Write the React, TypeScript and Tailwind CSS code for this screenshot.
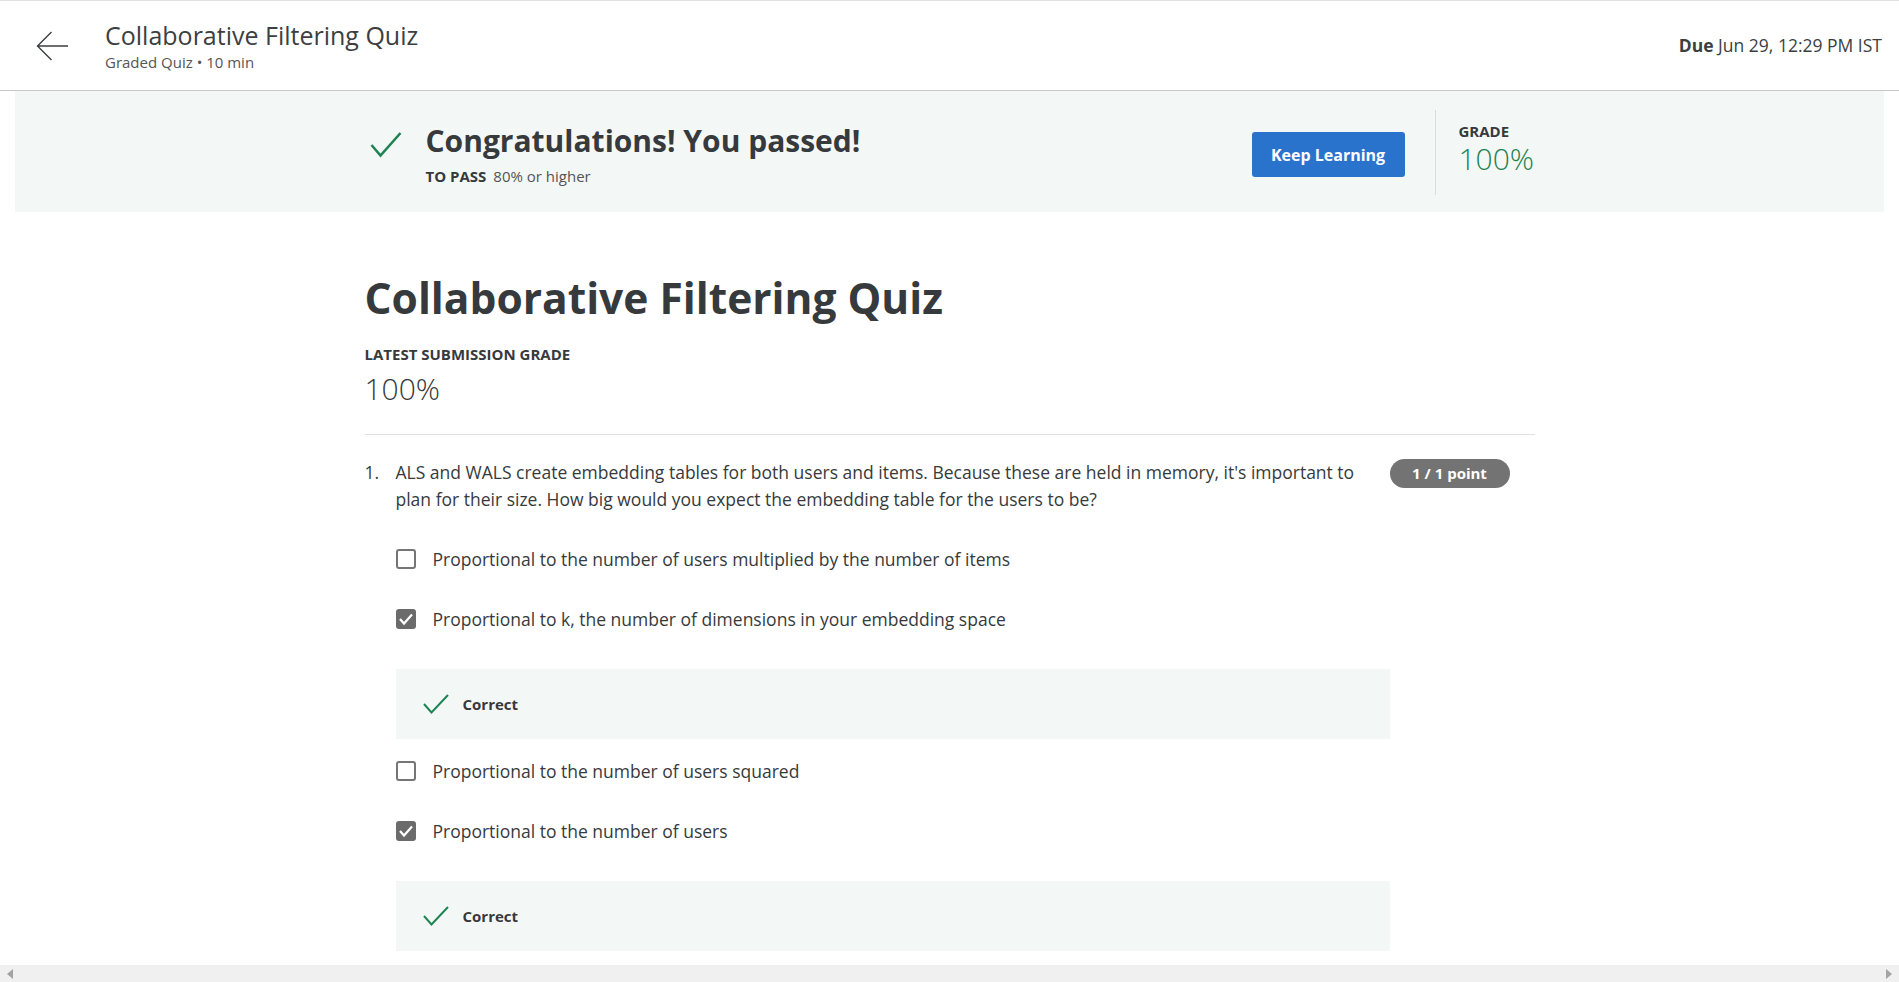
import React from 'react'

const options = [
  { label: 'Proportional to the number of users multiplied by the number of items', checked: false, correct: false },
  { label: 'Proportional to k, the number of dimensions in your embedding space', checked: true, correct: true },
  { label: 'Proportional to the number of users squared', checked: false, correct: false },
  { label: 'Proportional to the number of users', checked: true, correct: true },
]

function GreenCheck({ className }: { className?: string }) {
  return (
    <svg viewBox="0 0 32 27" className={className} fill="none">
      <path d="M1.5 14 L10.5 24.5 L30.5 2" stroke="#1f8354" strokeWidth="2.6" />
    </svg>
  )
}

function Checkbox({ checked }: { checked: boolean }) {
  if (checked) {
    return (
      <span className="w-5 h-5 rounded-[3px] bg-[#6b6b6b] flex items-center justify-center flex-shrink-0">
        <svg viewBox="0 0 20 20" className="w-5 h-5" fill="none">
          <path d="M4 10 L8 14.5 L16 5.5" stroke="white" strokeWidth="2.2" />
        </svg>
      </span>
    )
  }
  return <span className="w-5 h-5 rounded-[3px] border-2 border-[#767676] bg-white flex-shrink-0" />
}

export default function App() {
  return (
    <div className="h-screen flex flex-col overflow-hidden bg-white font-['Open_Sans',sans-serif] text-[#373a3c]">
      {/* Header */}
      <header className="h-[91px] flex-shrink-0 flex items-center justify-between border-t border-[#e2e2e2] border-b border-b-[#c8c8c8] pl-9 pr-[17px]">
        <div className="flex items-center">
          <svg viewBox="0 0 32 30" className="w-8 h-[30px]" fill="none">
            <path d="M32 15 H1.5 M15.5 1 L1.5 15 L15.5 29" stroke="#3c3f42" strokeWidth="1.4" />
          </svg>
          <div className="ml-[37px]">
            <h2 className="text-[25px] leading-[30px] text-[#3c3f42]">Collaborative Filtering Quiz</h2>
            <p className="text-[15px] leading-[20px] mt-[2px] text-[#555]">Graded Quiz • 10 min</p>
          </div>
        </div>
        <p className="text-[17.5px] text-[#3c3f42]">
          <span className="font-bold">Due</span> Jun 29, 12:29 PM IST
        </p>
      </header>

      <main className="flex-1 overflow-hidden">
        {/* Result banner */}
        <div className="mx-[15px] h-[121px] bg-[#f3f8f6]">
          <div className="w-[1170px] mx-auto h-full flex items-start justify-between">
            <div className="flex items-start pl-[5px] mt-[32px]">
              <GreenCheck className="w-[32px] h-[27px] mt-[8px]" />
              <div className="ml-[24px]">
                <h1 className="text-[30px] leading-[36px] font-bold text-[#373a3c]">Congratulations! You passed!</h1>
                <p className="text-[15px] leading-[20px] mt-[7px]">
                  <span className="font-bold">TO PASS</span>
                  <span className="ml-[7px] text-[#555]">80% or higher</span>
                </p>
              </div>
            </div>
            <div className="flex items-start">
              <button className="mt-[41px] w-[153px] h-[45px] rounded-[3px] bg-[#2a73cc] text-white text-[16px] font-bold">
                Keep Learning
              </button>
              <div className="w-px h-[85px] bg-[#dcdcdc] ml-[30px] mt-[19px]" />
              <div className="pl-[23px] w-[99px] mt-[30px]">
                <p className="text-[15px] leading-[20px] font-bold">GRADE</p>
                <p className="text-[30px] leading-[36px] font-light text-[#1f8354]">100%</p>
              </div>
            </div>
          </div>
        </div>

        {/* Content */}
        <div className="w-[1170px] mx-auto">
          <h1 className="mt-[61px] text-[42.5px] leading-[50px] font-bold text-[#373a3c]">Collaborative Filtering Quiz</h1>
          <p className="mt-[21px] text-[15px] leading-[20px] font-bold">LATEST SUBMISSION GRADE</p>
          <p className="mt-[6px] text-[30px] leading-[38px] font-light">100%</p>
          <div className="mt-[26px] h-px bg-[#e1e1e1]" />

          <div className="mt-[24px] flex">
            <span className="w-[31px] text-[17.5px] leading-[27px]">1.</span>
            <div className="w-[994px]">
              <p className="text-[17.5px] leading-[27px] pr-[24px]">
                ALS and WALS create embedding tables for both users and items. Because these are held in memory, it's important to plan for their size. How big would you expect the embedding table for the users to be?
              </p>
              <div className="mt-[16px]">
                {options.map((o) => (
                  <div key={o.label}>
                    <div className="h-[60px] flex items-center">
                      <Checkbox checked={o.checked} />
                      <span className="ml-[17px] text-[17.5px] leading-[27px]">{o.label}</span>
                    </div>
                    {o.correct && (
                      <div className="mt-[20px] mb-[2px] h-[70px] bg-[#f3f8f6] flex items-center pl-[27px]">
                        <svg viewBox="0 0 26 20" className="w-[26px] h-[20px]" fill="none">
                          <path d="M1 10 L8.5 18.5 L25 1" stroke="#1f8354" strokeWidth="2" />
                        </svg>
                        <span className="ml-[14px] text-[15px] font-bold">Correct</span>
                      </div>
                    )}
                  </div>
                ))}
              </div>
            </div>
            <div className="w-[144px]">
              <span className="inline-block h-[29px] w-[120px] rounded-full bg-[#737373] text-white text-[15px] font-bold leading-[29px] text-center">
                1 / 1 point
              </span>
            </div>
          </div>
        </div>
      </main>

      {/* Horizontal scrollbar */}
      <div className="h-[17px] flex-shrink-0 bg-[#f0f0f0] flex items-center justify-between px-[7px]">
        <svg viewBox="0 0 6 10" className="w-[6px] h-[10px]">
          <path d="M6 0 L0 5 L6 10 Z" fill="#a3a3a3" />
        </svg>
        <svg viewBox="0 0 6 10" className="w-[6px] h-[10px]">
          <path d="M0 0 L6 5 L0 10 Z" fill="#a3a3a3" />
        </svg>
      </div>
    </div>
  )
}
